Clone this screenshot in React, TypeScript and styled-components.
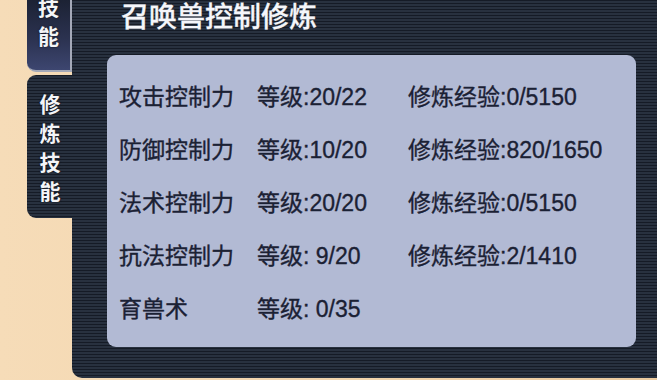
import React from "react";
import styled, { createGlobalStyle } from "styled-components";

const Global = createGlobalStyle`
  html, body { margin: 0; padding: 0; }
  body { width: 657px; height: 380px; overflow: hidden; background: #f3d6b0; }
`;

const stripes = `
  background-color: #1a2130;
  background-image: repeating-linear-gradient(
    to bottom,
    #151b26 0px,
    #151b26 1.5px,
    #28313f 1.5px,
    #28313f 3px
  );
  background-attachment: fixed;
`;

const Screen = styled.div`
  width: 657px;
  height: 380px;
  display: flex;
  overflow: hidden;
  background: linear-gradient(to right, #f6dcb8 0%, #f2d4ab 60%, #eccb9f 100%);
  font-family: "Liberation Sans", "Noto Sans CJK SC", sans-serif;
`;

const TabColumn = styled.div`
  width: 45px;
  margin-left: 27px;
  display: flex;
  flex-direction: column;
  gap: 3px;
`;

const Tab = styled.div<{ $active?: boolean; $h: number }>`
  height: ${(p) => p.$h}px;
  box-sizing: border-box;
  display: flex;
  flex-direction: column;
  align-items: center;
  color: #f4f5f8;
  font-family: "Noto Sans CJK SC", sans-serif;
  font-weight: 700;
  font-size: 21px;
  line-height: 29px;
  text-shadow: 0 0 2px #0b0e16;
  ${(p) =>
    p.$active
      ? `
    ${stripes}
    border-radius: 9px 0 0 9px;
    justify-content: center;
    padding-bottom: 0px;
    margin-right: -1px;
  `
      : `
    background: linear-gradient(to bottom, #1c2234 0%, #2b3250 55%, #3d4670 100%);
    border-right: 2px solid #a4a9b8;
    border-bottom: 2px solid #a4a9b8;
    border-radius: 0 0 0 9px;
    justify-content: flex-end;
    padding-bottom: 20px;
  `}
`;

const MainPanel = styled.div`
  flex: 1;
  height: 378px;
  ${stripes}
  border-radius: 0 0 0 10px;
  box-sizing: border-box;
  padding-left: 35px;
  display: flex;
  flex-direction: column;
`;

const Title = styled.div`
  height: 55px;
  padding-left: 14px;
  color: #f5f6fa;
  font-family: "Noto Sans CJK SC", sans-serif;
  font-weight: 500;
  font-size: 28px;
  line-height: 30px;
  -webkit-text-stroke: 0.3px #f5f6fa;
  box-sizing: border-box;
`;

const InfoCard = styled.div`
  width: 529px;
  height: 292px;
  box-sizing: border-box;
  background: #b2bad4;
  border-radius: 9px;
  padding: 29px 0 0 12px;
  display: grid;
  grid-template-columns: 138px 151px auto;
  grid-auto-rows: 53px;
  align-items: start;
  color: #1b2134;
  font-size: 23px;
  line-height: 27px;
  -webkit-text-stroke: 0.35px #1b2134;
`;

const Cell = styled.div<{ $pre?: boolean }>`
  white-space: ${(p) => (p.$pre ? "pre" : "nowrap")};
  font-family: "Liberation Sans", "Noto Sans CJK SC", sans-serif;
`;

const rows = [
  { name: "攻击控制力", level: "20/22", exp: "0/5150" },
  { name: "防御控制力", level: "10/20", exp: "820/1650" },
  { name: "法术控制力", level: "20/20", exp: "0/5150" },
  { name: "抗法控制力", level: " 9/20", exp: "2/1410" },
  { name: "育兽术", level: " 0/35", exp: "" },
];

export default function App() {
  return (
    <>
      <Global />
      <Screen>
        <TabColumn>
          <Tab $h={72}>
            <span>技</span>
            <span>能</span>
          </Tab>
          <Tab $active $h={143}>
            <span>修</span>
            <span>炼</span>
            <span>技</span>
            <span>能</span>
          </Tab>
        </TabColumn>
        <MainPanel>
          <Title>召唤兽控制修炼</Title>
          <InfoCard>
            {rows.map((r) => (
              <React.Fragment key={r.name}>
                <Cell>{r.name}</Cell>
                <Cell $pre>等级:{r.level}</Cell>
                <Cell>{r.exp ? `修炼经验:${r.exp}` : ""}</Cell>
              </React.Fragment>
            ))}
          </InfoCard>
        </MainPanel>
      </Screen>
    </>
  );
}
